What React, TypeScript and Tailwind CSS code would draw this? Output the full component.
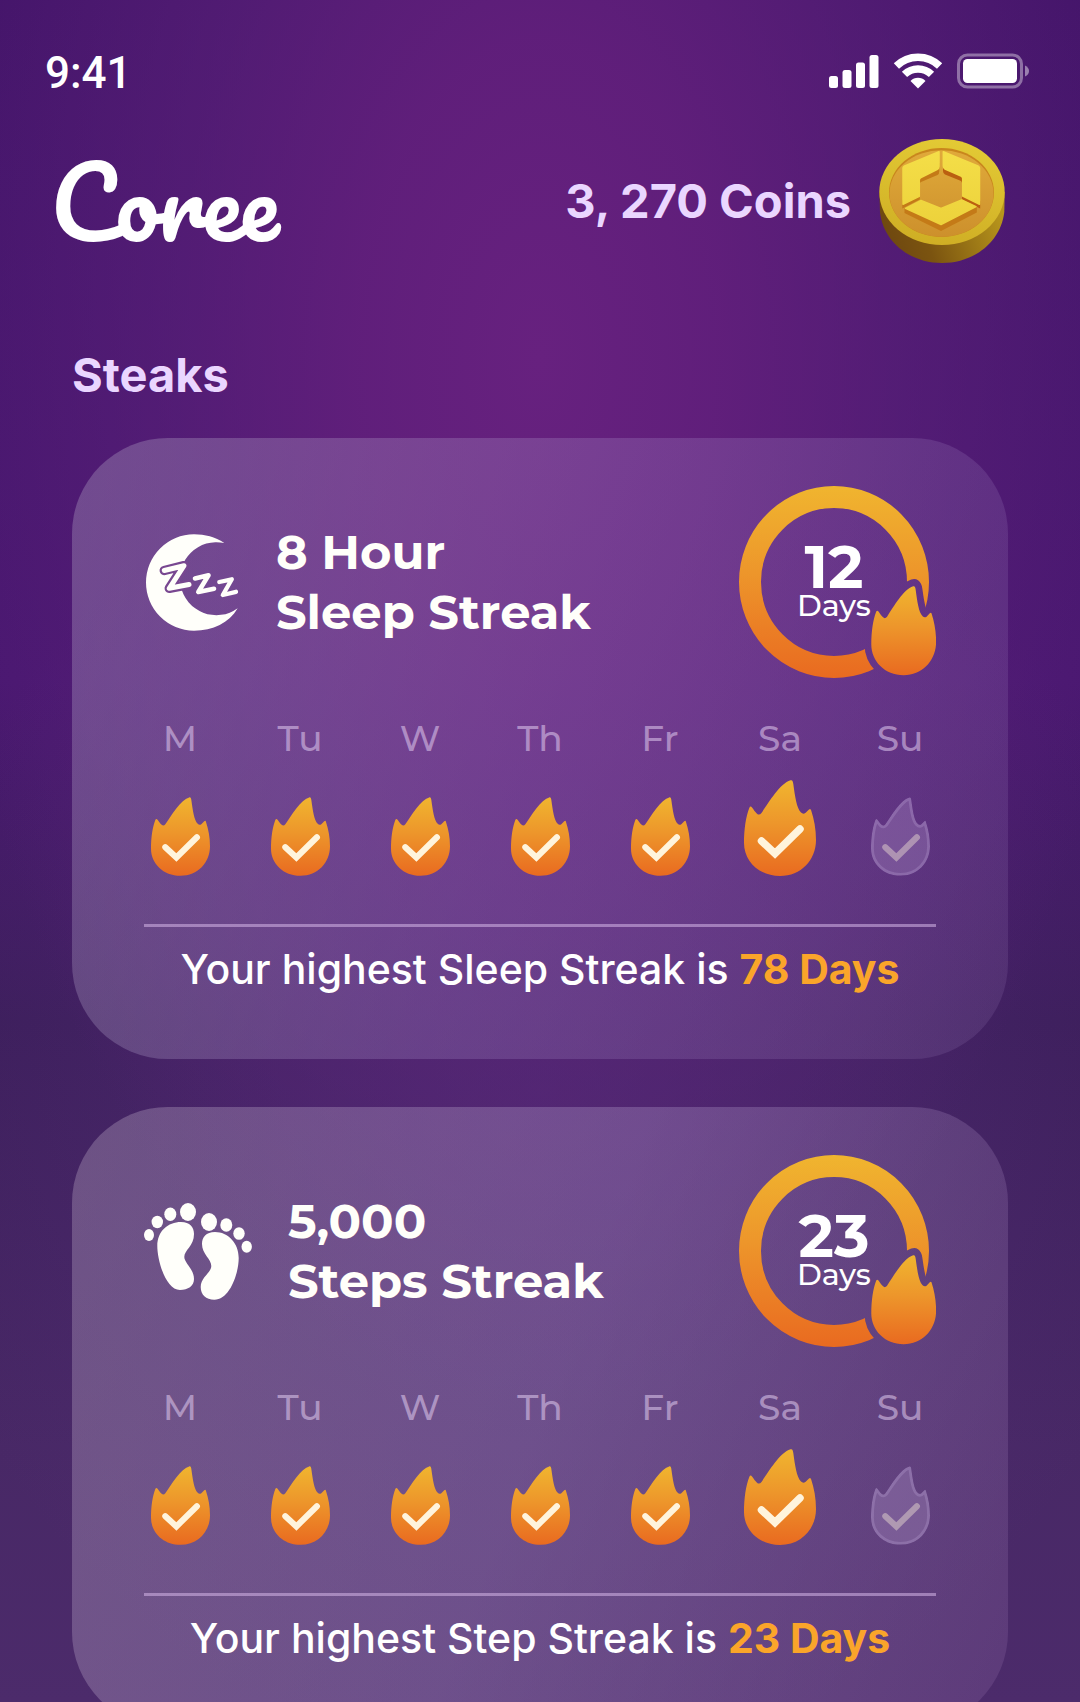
import React, { useId } from "react";

const FLAME =
  "M46.5 0.3 C48.6 -0.3 49 2 49.3 4 C51 16 52.5 28 57 32.5 Q59 34.5 61.4 33 L65 29.4 Q66.6 28 67.2 30.5 C70 39 72 49 72 60 C72 80 57 96 36 96 C15 96 0 81 0 63 C0 49 2 36 5.3 28 Q6.3 25.4 8 27.5 C10 30 11 32 13 33.7 Q15.3 35.7 17.5 33 C25 22 36 3.5 46.5 0.3Z";

function FireStops() {
  return (
    <>
      <stop offset="0" stopColor="#f0b52f" />
      <stop offset="0.45" stopColor="#ed962b" />
      <stop offset="1" stopColor="#e96a20" />
    </>
  );
}

function StatusIcons() {
  return (
    <div className="flex items-center gap-[14px]" aria-hidden="true">
      <svg className="h-[33px] w-[50px]" viewBox="0 0 50 33" fill="#fff">
        <rect x="0" y="21" width="9" height="12" rx="2.5" />
        <rect x="13.5" y="15" width="9" height="18" rx="2.5" />
        <rect x="27" y="7.5" width="9" height="25.5" rx="2.5" />
        <rect x="40.5" y="0" width="9" height="33" rx="2.5" />
      </svg>
      <svg className="h-[36px] w-[50px]" viewBox="0 0 50 36" fill="none" stroke="#fff" strokeWidth="7.5">
        <path d="M3.4 13 A31 31 0 0 1 46.6 13" />
        <path d="M11.5 21.4 A19.3 19.3 0 0 1 38.5 21.4" />
        <path d="M25 35.5 L17.5 28 A10.5 10.5 0 0 1 32.5 28 Z" fill="#fff" stroke="none" />
      </svg>
      <svg className="h-[36px] w-[73px]" viewBox="0 0 73 36">
        <rect x="1.5" y="2" width="63" height="32" rx="9" fill="none" stroke="#fff" strokeOpacity="0.38" strokeWidth="3" />
        <rect x="6" y="6" width="54" height="24" rx="4.5" fill="#fff" />
        <path d="M68 12.5 Q72 14.5 72 18 Q72 21.5 68 23.5 Z" fill="#fff" fillOpacity="0.45" />
      </svg>
    </div>
  );
}

function Coin() {
  return (
    <svg className="h-[124px] w-[126px]" viewBox="0 0 126 124" role="img" aria-label="Coin">
      <defs>
        <linearGradient id="coin-side" x1="0" y1="0.6" x2="1" y2="0.4">
          <stop offset="0" stopColor="#6d4610" />
          <stop offset="0.35" stopColor="#7b5410" />
          <stop offset="1" stopColor="#b8961c" />
        </linearGradient>
        <linearGradient id="coin-rim" x1="0.6" y1="0" x2="0.4" y2="1">
          <stop offset="0" stopColor="#e3ca35" />
          <stop offset="1" stopColor="#cfae24" />
        </linearGradient>
        <linearGradient id="coin-well" x1="0" y1="0" x2="0" y2="1">
          <stop offset="0" stopColor="#e0aa3a" />
          <stop offset="1" stopColor="#cd902c" />
        </linearGradient>
        <linearGradient id="coin-mark" gradientUnits="userSpaceOnUse" x1="0" y1="12" x2="0" y2="86">
          <stop offset="0" stopColor="#f4de48" />
          <stop offset="1" stopColor="#edd23b" />
        </linearGradient>
      </defs>
      <path d="M0.3 53 L1 73 C4 102 30 124 63 124 C96 124 122 102 125.3 73 L125.7 53Z" fill="url(#coin-side)" />
      <ellipse cx="63" cy="53" rx="62.7" ry="53" fill="url(#coin-rim)" />
      <ellipse cx="62.5" cy="53.5" rx="52.5" ry="44.5" fill="#c9861d" />
      <ellipse cx="62.5" cy="54.5" rx="52" ry="43.3" fill="url(#coin-well)" />
      <g fill="#c47a17">
        <path d="M23.3 62 L23.3 69.5 L40.8 60.5 L40.8 45 Q40.8 43.5 42 43 L58.5 36 Q60.3 35 60.3 32 L60.3 24 L34 36Z" />
        <path d="M101.2 62 L101.2 69.5 L83 60.5 L83 44 Q83 42.5 81.5 41.8 L66 35.5 Q64 34.5 64 32 L64 24 L92 36Z" fill="#bb5f10" />
        <path d="M25.5 69 L25.5 74 L62 92 L97.8 73.5 L97.8 68 L62 70Z" />
      </g>
      <g fill="url(#coin-mark)" stroke="url(#coin-mark)" strokeWidth="1.5" strokeLinejoin="round">
        <path d="M60 12.7 L25 27.3 Q24 27.8 24 29 L24 65.3 L40.3 57.3 L40.3 41 Q40.3 39.3 42 38.5 L58 30.5 Q60 29.5 60 27.5Z" />
        <path d="M64.3 12.7 L99.5 27.3 Q100.5 27.8 100.5 29 L100.5 65.3 L83.7 57 L83.7 39.5 Q83.7 37.8 82 37 L66 30 Q64.3 29 64.3 27Z" />
        <path d="M26.5 69.3 L42 61.5 L62 69.5 L82.7 61 L97 67.7 L62 85.5Z" />
      </g>
    </svg>
  );
}

function SleepIcon() {
  return (
    <svg className="h-[97px] w-[96px] shrink-0" viewBox="0 0 96 97" aria-hidden="true">
      <path d="M80.3 9 C71 3 61 0.3 50 0.3 A48 48.2 0 0 0 2 48.5 A48 48.2 0 0 0 50 96.7 C69 96.7 85 89 93.7 74.3 A36.5 36.5 0 1 1 80.3 9Z" fill="#fffffa" />
      <g fill="none" strokeLinecap="round" strokeLinejoin="round">
        <path d="M20.3 36.5 L40 31.7 L25.3 54.3 L45 50.5" stroke="#784790" strokeWidth="9.5" />
        <path d="M20.3 36.5 L40 31.7 L25.3 54.3 L45 50.5" stroke="#fffffa" strokeWidth="5" />
        <path d="M51 44.5 L64.5 41.3 L54.3 58 L70 54.8" stroke="#fffffa" strokeWidth="4.6" />
        <path d="M75.3 48 L87.8 45.3 L78.8 61 L92 57.8" stroke="#fffffa" strokeWidth="4.3" />
      </g>
    </svg>
  );
}

function StepsIcon() {
  return (
    <svg className="h-[97px] w-[108px] shrink-0" viewBox="0 0 108 97" fill="#fffffa" aria-hidden="true">
      <ellipse cx="5" cy="32" rx="5" ry="6" />
      <ellipse cx="13.3" cy="19" rx="5.7" ry="6.2" />
      <ellipse cx="26.3" cy="11.3" rx="6" ry="6.7" />
      <ellipse cx="44" cy="9" rx="8" ry="9" />
      <ellipse cx="65" cy="19" rx="8" ry="9" />
      <ellipse cx="82.3" cy="22" rx="6" ry="6.7" />
      <ellipse cx="95" cy="30.5" rx="5.7" ry="6.3" />
      <ellipse cx="102.7" cy="43.7" rx="5.2" ry="6" />
      <path d="M37 19 C46 19 50 24 50 31 C50 43 40.3 47 40.3 54 C40.3 60 50 66 50 76 C50 83 44 87 36 87 C22 87 13.3 58 13.3 43 C13.3 28 24 19 37 19Z" />
      <path d="M71 29 C62 29 58 34 58 41 C58 51 67.3 56 67.3 63 C67.3 70 56.7 74 56.7 84 C56.7 92 62 96.7 70.3 96.7 C86 96.7 94.7 70 94.7 55 C94.7 40 84 29 71 29Z" />
    </svg>
  );
}

function StreakRing({ days }: { days: number }) {
  const id = useId();
  return (
    <div className="relative flex h-[192px] w-[197px] shrink-0">
      <svg className="absolute inset-0 h-full w-full" viewBox="0 0 197 192" aria-hidden="true">
        <defs>
          <linearGradient id={`${id}-ring`} gradientUnits="userSpaceOnUse" x1="0" y1="0" x2="0" y2="192">
            <FireStops />
          </linearGradient>
          <linearGradient id={`${id}-flame`} x1="0" y1="0" x2="0" y2="1">
            <FireStops />
          </linearGradient>
          <mask id={`${id}-gap`} maskUnits="userSpaceOnUse" x="0" y="0" width="197" height="192">
            <rect width="197" height="192" fill="#fff" />
            <path d={FLAME} transform="translate(132.3 100) scale(0.9 0.93)" fill="#000" stroke="#000" strokeWidth="15" strokeLinejoin="round" />
          </mask>
        </defs>
        <ellipse cx="95" cy="96" rx="84" ry="85" fill="none" stroke={`url(#${id}-ring)`} strokeWidth="22" mask={`url(#${id}-gap)`} />
        <path d={FLAME} transform="translate(132.3 100) scale(0.9 0.93)" fill={`url(#${id}-flame)`} />
      </svg>
      <p className="relative flex w-[190px] flex-col items-center justify-center pt-1 text-white">
        <span className="text-[60px] leading-[44px] font-bold">{days}</span>
        <span className="text-[30px] leading-[34px] font-medium">Days</span>
      </p>
    </div>
  );
}

type DayState = "done" | "today" | "pending";

function DayFlame({ state }: { state: DayState }) {
  const id = useId();
  const pending = state === "pending";
  return (
    <svg
      className={state === "today" ? "h-[96px] w-[72px]" : "h-[79px] w-[59px]"}
      viewBox="0 0 72 96"
      role="img"
      aria-label={pending ? "Not completed" : "Completed"}
    >
      <defs>
        <linearGradient id={id} x1="0" y1="0" x2="0" y2="1">
          <FireStops />
        </linearGradient>
        <clipPath id={`${id}-clip`}>
          <path d={FLAME} />
        </clipPath>
      </defs>
      {pending ? (
        <path d={FLAME} fill="#c9aee0" fillOpacity="0.25" stroke="#c9aee0" strokeOpacity="0.24" strokeWidth="7" clipPath={`url(#${id}-clip)`} />
      ) : (
        <path d={FLAME} fill={`url(#${id})`} />
      )}
      <path
        d="M17.5 61 L31 73.5 L56 49"
        fill="none"
        stroke="#fff4dc"
        strokeOpacity={pending ? 0.4 : 1}
        strokeWidth="7.5"
        strokeLinecap="round"
        strokeLinejoin="miter"
      />
    </svg>
  );
}

const WEEK: { label: string; state: DayState }[] = [
  { label: "M", state: "done" },
  { label: "Tu", state: "done" },
  { label: "W", state: "done" },
  { label: "Th", state: "done" },
  { label: "Fr", state: "done" },
  { label: "Sa", state: "today" },
  { label: "Su", state: "pending" },
];

type StreakCardProps = {
  icon: React.ReactNode;
  goal: string;
  name: string;
  days: number;
  record: string;
  best: number;
  tint: string;
};

function StreakCard({ icon, goal, name, days, record, best, tint }: StreakCardProps) {
  return (
    <article className={`rounded-[96px] px-[72px] pt-12 pb-[66px] font-['Montserrat','Inter',sans-serif] ${tint}`}>
      <div className="flex items-center justify-between">
        <div className="flex items-center gap-9">
          {icon}
          <h2 className="text-[48px] leading-[60px] font-bold whitespace-nowrap text-[#fffffa]">
            {goal}
            <br />
            {name}
          </h2>
        </div>
        <StreakRing days={days} />
      </div>
      <ul className="mt-10 flex justify-between">
        {WEEK.map((day) => (
          <li key={day.label} className="flex w-[72px] flex-col items-center gap-[22px]">
            <span className="text-[36px] leading-[40px] font-medium text-[#e4cff2]/55">{day.label}</span>
            <span className="flex h-24 items-end">
              <DayFlame state={day.state} />
            </span>
          </li>
        ))}
      </ul>
      <hr className="mt-12 border-t-[3px] border-[#d6b6e8]/55" />
      <p className="mt-[18px] text-center font-['Inter',sans-serif] text-[41px] leading-[48px] font-medium whitespace-nowrap text-white">
        Your highest {record} is <strong className="font-bold text-[#faa52a]">{best} Days</strong>
      </p>
    </article>
  );
}

export default function App() {
  return (
    <main className="h-screen overflow-y-auto bg-[radial-gradient(ellipse_56%_62%_at_50%_21%,rgba(103,33,127,1)_0%,rgba(100,32,125,0.85)_30%,rgba(94,34,124,0.5)_60%,rgba(84,34,118,0)_100%),radial-gradient(ellipse_60%_40%_at_50%_64%,rgba(98,56,138,0.4)_0%,rgba(80,40,110,0)_100%),linear-gradient(180deg,#44156a_0%,#4a1871_40%,#3c1e5b_60%,#482866_85%,#4c2b6b_100%)] font-['Inter',sans-serif] [scrollbar-width:none]">
      <div className="flex h-[99px] items-end justify-between pr-[50px] pl-[45px]">
        <time className="font-['Roboto',sans-serif] text-[44px] leading-[52px] font-medium text-white">9:41</time>
        <div className="flex h-14 items-center">
          <StatusIcons />
        </div>
      </div>
      <header className="mt-10 flex items-center justify-between pr-[75px] pl-[50px]">
        <p className="font-['Pacifico','Lato',sans-serif] text-[96px] leading-[124px] text-white">Coree</p>
        <p className="flex items-center gap-7 text-[47px] leading-[60px] font-bold text-[#ead6ff]">
          3, 270 Coins
          <Coin />
        </p>
      </header>
      <section className="px-[72px] pt-[82px]">
        <h1 className="text-[47px] leading-[60px] font-bold text-[#ead6ff]">Steaks</h1>
        <div className="mt-[33px] flex flex-col gap-12">
          <StreakCard
            icon={<SleepIcon />}
            goal="8 Hour"
            name="Sleep Streak"
            days={12}
            record="Sleep Streak"
            best={78}
            tint="bg-[linear-gradient(110deg,rgba(195,190,210,0.3)_0%,rgba(170,145,205,0.26)_50%,rgba(150,120,180,0.18)_100%)]"
          />
          <StreakCard
            icon={<StepsIcon />}
            goal="5,000"
            name="Steps Streak"
            days={23}
            record="Step Streak"
            best={23}
            tint="bg-[linear-gradient(110deg,rgba(205,190,210,0.3)_0%,rgba(195,175,220,0.28)_50%,rgba(170,130,190,0.18)_100%)]"
          />
        </div>
      </section>
    </main>
  );
}
